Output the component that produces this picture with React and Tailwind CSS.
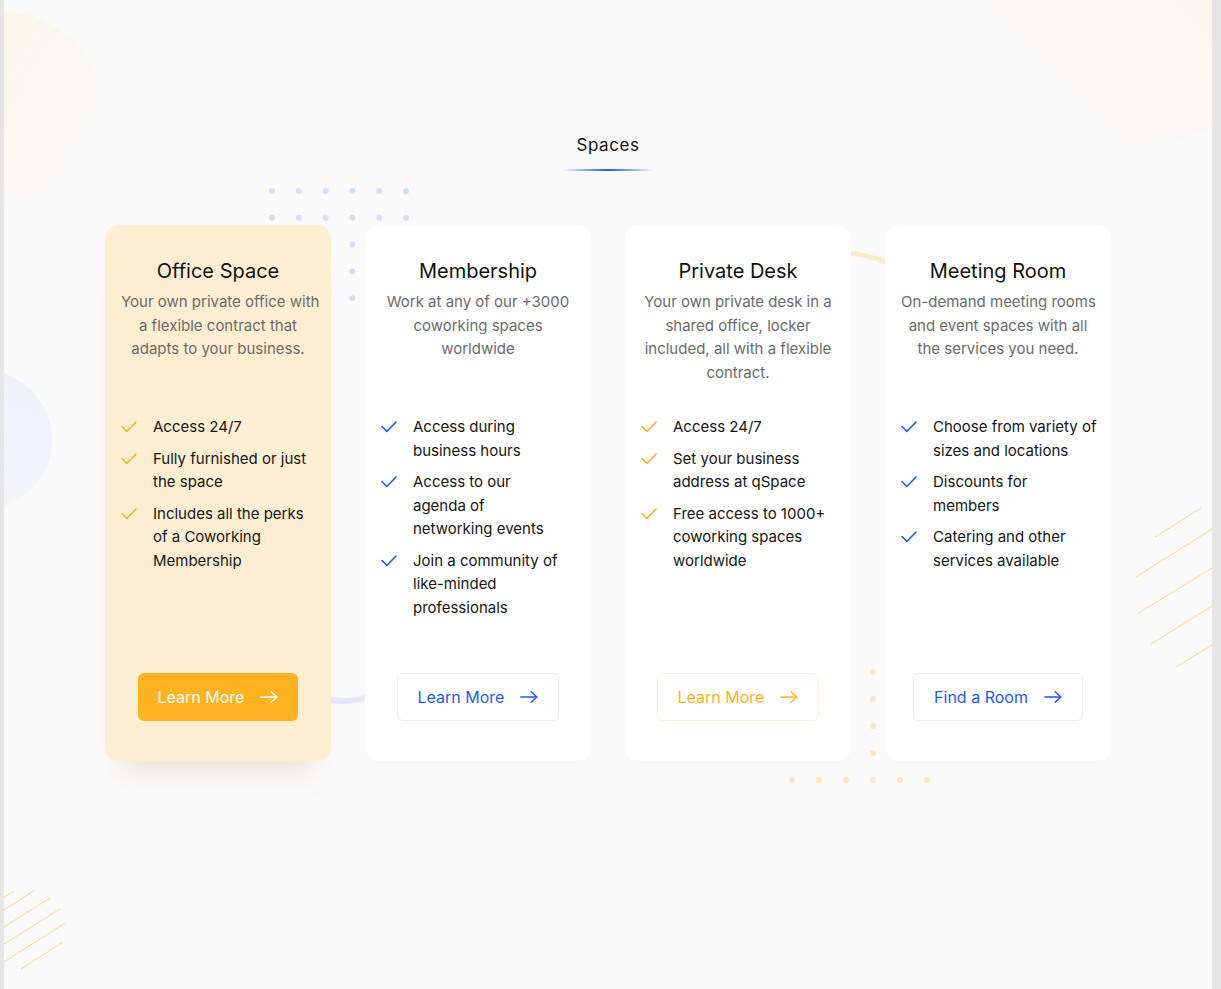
import React from "react";

const font = { fontFamily: "Inter, 'Noto Sans', sans-serif" };

function Check({ color }) {
  return (
    <svg width="16" height="12" viewBox="0 0 16 12" fill="none" className="mt-[6px] shrink-0">
      <polyline points="1,5.5 5.8,10.5 15,1" stroke={color} strokeWidth="1.6" strokeLinecap="round" strokeLinejoin="round" />
    </svg>
  );
}

function Arrow({ color }) {
  return (
    <svg width="18" height="12" viewBox="0 0 18 12" fill="none">
      <line x1="0.8" y1="6" x2="16.6" y2="6" stroke={color} strokeWidth="1.5" strokeLinecap="round" />
      <polyline points="11.2,0.8 16.8,6 11.2,11.2" stroke={color} strokeWidth="1.5" strokeLinecap="round" strokeLinejoin="round" />
    </svg>
  );
}

const cards = [
  {
    title: "Office Space",
    desc: ["Your own private office with", "a flexible contract that", "adapts to your business."],
    features: [["Access 24/7"], ["Fully furnished or just", "the space"], ["Includes all the perks", "of a Coworking", "Membership"]],
    accent: "#ffb322",
    button: "Learn More",
    variant: "filled",
  },
  {
    title: "Membership",
    desc: ["Work at any of our +3000", "coworking spaces", "worldwide"],
    features: [["Access during", "business hours"], ["Access to our", "agenda of", "networking events"], ["Join a community of", "like-minded", "professionals"]],
    accent: "#1f5af6",
    button: "Learn More",
    variant: "blue",
  },
  {
    title: "Private Desk",
    desc: ["Your own private desk in a", "shared office, locker", "included, all with a flexible", "contract."],
    features: [["Access 24/7"], ["Set your business", "address at qSpace"], ["Free access to 1000+", "coworking spaces", "worldwide"]],
    accent: "#ffb322",
    button: "Learn More",
    variant: "orange",
  },
  {
    title: "Meeting Room",
    desc: ["On-demand meeting rooms", "and event spaces with all", "the services you need."],
    features: [["Choose from variety of", "sizes and locations"], ["Discounts for", "members"], ["Catering and other", "services available"]],
    accent: "#1f5af6",
    button: "Find a Room",
    variant: "blue",
  },
];

function Button({ variant, label }) {
  if (variant === "filled") {
    return (
      <button className="mt-auto flex h-[48px] items-center gap-[16px] self-center rounded-[6px] bg-[#ffb321] px-[20px] text-[16px] text-white">
        <span>{label}</span>
        <Arrow color="#ffffff" />
      </button>
    );
  }
  if (variant === "orange") {
    return (
      <button className="mt-auto flex h-[48px] items-center gap-[16px] self-center rounded-[6px] border border-[#fff1dc] bg-white px-[20px] text-[16px] text-[#ffb322]">
        <span>{label}</span>
        <Arrow color="#ffb322" />
      </button>
    );
  }
  return (
    <button className="mt-auto flex h-[48px] items-center gap-[16px] self-center rounded-[6px] border border-[#e6edfd] bg-white px-[20px] text-[16px] text-[#1f5af6]">
      <span>{label}</span>
      <Arrow color="#1f5af6" />
    </button>
  );
}

function Card({ c }) {
  const filled = c.variant === "filled";
  return (
    <div
      className={
        filled
          ? "flex h-[536px] flex-col rounded-[14px] bg-[#ffefd2] px-[16px] pb-[40px] pt-[33px] shadow-[0_28px_26px_-18px_rgba(190,160,110,0.22)]"
          : "flex h-[536px] flex-col rounded-[14px] bg-white px-[16px] pb-[40px] pt-[33px]"
      }
    >
      <h3 className="text-center text-[20px] leading-[26px] text-[#111111]">{c.title}</h3>
      <div className="mt-[6px] h-[94px] text-center text-[15px] leading-[23.5px] text-[#6b6b6b]">
        {c.desc.map((l) => (
          <div key={l} className="whitespace-nowrap">{l}</div>
        ))}
      </div>
      <div className="mt-[31px] flex flex-col gap-[8px]">
        {c.features.map((f) => (
          <div key={f[0]} className="flex gap-[16px]">
            <Check color={c.accent} />
            <div className="text-[15px] leading-[23.5px] text-[#161616]">
              {f.map((l) => (
                <div key={l} className="whitespace-nowrap">{l}</div>
              ))}
            </div>
          </div>
        ))}
      </div>
      <Button variant={c.variant} label={c.button} />
    </div>
  );
}

function DotGrid({ color, cols, rows, gap }) {
  const dots = [];
  for (let r = 0; r < rows; r++) {
    for (let i = 0; i < cols; i++) {
      dots.push(<circle key={r + "-" + i} cx={3 + i * gap} cy={3 + r * gap} r="3" fill={color} />);
    }
  }
  return (
    <svg width={6 + (cols - 1) * gap} height={6 + (rows - 1) * gap}>
      {dots}
    </svg>
  );
}

export default function App() {
  return (
    <div className="relative flex min-h-[989px] w-full overflow-hidden bg-[#fafafa]" style={font}>
      {/* background decorations */}
      <div className="absolute left-[-90px] top-[12px] h-[190px] w-[190px] rounded-full bg-[linear-gradient(120deg,#fdf3e0,#fafafa_85%)]" />
      <div className="absolute left-[957px] top-[-207px] h-[352px] w-[352px] rounded-full bg-[linear-gradient(225deg,#fdf3e1,#fafafa_80%)]" />
      <div className="absolute left-[-88px] top-[370px] h-[140px] w-[140px] rounded-full bg-[linear-gradient(200deg,#edf1fd,#f6f7fb)]" />
      <div className="absolute left-[269px] top-[188px]">
        <DotGrid color="#d3dffb" cols={6} rows={5} gap={26.8} />
      </div>
      <div className="absolute left-[789px] top-[669px]">
        <DotGrid color="#fde6bf" cols={6} rows={5} gap={27} />
      </div>
      <svg className="absolute left-0 top-0" width="1221" height="989" fill="none">
        <path d="M 300 688 Q 345 716 395 684" stroke="#e3e9fc" strokeWidth="6" />
        <path d="M 820 253 Q 862 249 905 270" stroke="#fdebc8" strokeWidth="5" />
        <g stroke="#ffd98c" strokeWidth="1">
          <line x1="4" y1="897" x2="15" y2="891" />
          <line x1="4" y1="910" x2="35" y2="890" />
          <line x1="4" y1="927" x2="50" y2="898" />
          <line x1="4" y1="944" x2="60" y2="909" />
          <line x1="4" y1="962" x2="65" y2="923" />
          <line x1="21" y1="969" x2="63" y2="942" />
          <line x1="1155" y1="537" x2="1201" y2="508" />
          <line x1="1136" y1="577" x2="1212" y2="529" />
          <line x1="1137" y1="614" x2="1212" y2="568" />
          <line x1="1151" y1="644" x2="1212" y2="606" />
          <line x1="1176" y1="667" x2="1212" y2="645" />
        </g>
      </svg>

      <div className="relative z-10 w-[4px] shrink-0 bg-[#e6e6e6]" />
      <main className="relative z-10 flex flex-1 flex-col items-center pt-[133px]">
        <h2 className="text-[17px] leading-[24px] tracking-[0.6px] text-[#111111]">Spaces</h2>
        <div className="mt-[12px] h-[2px] w-[92px] bg-[linear-gradient(90deg,rgba(31,90,246,0),#1f5af6_50%,rgba(31,90,246,0))]" />
        <div className="mt-[54px] grid grid-cols-[repeat(4,226px)] gap-[34px]">
          {cards.map((c) => (
            <Card key={c.title} c={c} />
          ))}
        </div>
      </main>
      <div className="relative z-10 w-[9px] shrink-0 bg-[#e6e6e6]" />
    </div>
  );
}
